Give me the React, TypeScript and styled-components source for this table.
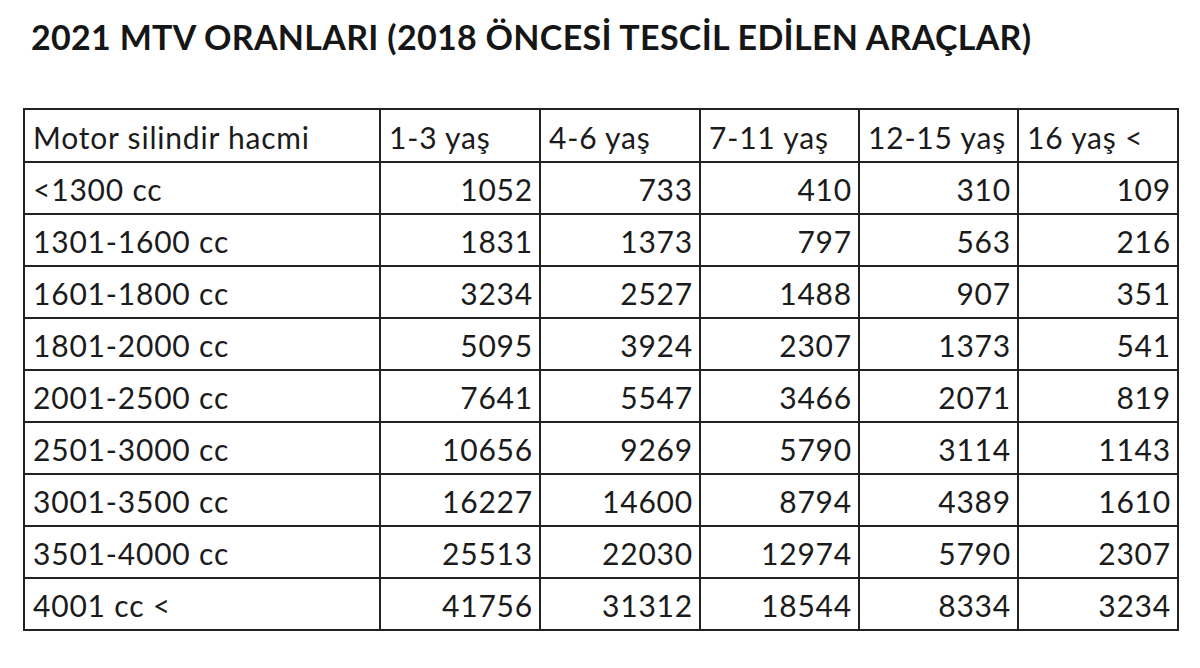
import * as React from 'react';
import styled, { createGlobalStyle } from 'styled-components';

const GlobalStyle = createGlobalStyle`
  html, body {
    margin: 0;
    padding: 0;
    background: #ffffff;
  }
  body {
    font-family: Lato, "Open Sans", "Liberation Sans", sans-serif;
    color: #1b1b1b;
  }
`;

const headers = ['Motor silindir hacmi', '1-3 yaş', '4-6 yaş', '7-11 yaş', '12-15 yaş', '16 yaş <'];

const rows: [string, number[]][] = [
  ['<1300 cc', [1052, 733, 410, 310, 109]],
  ['1301-1600 cc', [1831, 1373, 797, 563, 216]],
  ['1601-1800 cc', [3234, 2527, 1488, 907, 351]],
  ['1801-2000 cc', [5095, 3924, 2307, 1373, 541]],
  ['2001-2500 cc', [7641, 5547, 3466, 2071, 819]],
  ['2501-3000 cc', [10656, 9269, 5790, 3114, 1143]],
  ['3001-3500 cc', [16227, 14600, 8794, 4389, 1610]],
  ['3501-4000 cc', [25513, 22030, 12974, 5790, 2307]],
  ['4001 cc <', [41756, 31312, 18544, 8334, 3234]],
];

const colWidths = [356, 160, 160, 159, 159, 160];

const App = () => {
  return (
    <Page>
      <GlobalStyle />
      <Title>2021 MTV ORANLARI (2018 ÖNCESİ TESCİL EDİLEN ARAÇLAR)</Title>
      <Table>
        <colgroup>
          {colWidths.map((w, i) => (
            <col key={i} style={{ width: w }} />
          ))}
        </colgroup>
        <thead>
          <tr>
            {headers.map((h) => (
              <HeadCell key={h}>{h}</HeadCell>
            ))}
          </tr>
        </thead>
        <tbody>
          {rows.map(([label, values]) => (
            <tr key={label}>
              <LabelCell>{label}</LabelCell>
              {values.map((v, i) => (
                <NumberCell key={i}>{v}</NumberCell>
              ))}
            </tr>
          ))}
        </tbody>
      </Table>
    </Page>
  );
};

export default App;

const Page = styled.div`
  width: 1200px;
  height: 668px;
  padding: 16px 0 0 23px;
  box-sizing: border-box;
  overflow: hidden;
`;

const Title = styled.h1`
  margin: 0 0 0 8px;
  font-size: 34px;
  font-weight: 700;
  line-height: 42px;
  letter-spacing: 0.3px;
  color: #161616;
`;

const Table = styled.table`
  margin-top: 50px;
  border-collapse: collapse;
  table-layout: fixed;
  width: 1154px;
  font-size: 30px;
  letter-spacing: 0.8px;
  border: 2px solid #222;
`;

const Cell = styled.td`
  border: 2px solid #222;
  height: 48px;
  padding: 2px 8px 0 8px;
  white-space: nowrap;
  overflow: hidden;
`;

const HeadCell = styled(Cell).attrs({ as: 'th' })`
  font-weight: 400;
  text-align: left;
  height: 49px;
`;

const LabelCell = styled(Cell)`
  text-align: left;
`;

const NumberCell = styled(Cell)`
  text-align: right;
  padding-right: 6px;
`;
